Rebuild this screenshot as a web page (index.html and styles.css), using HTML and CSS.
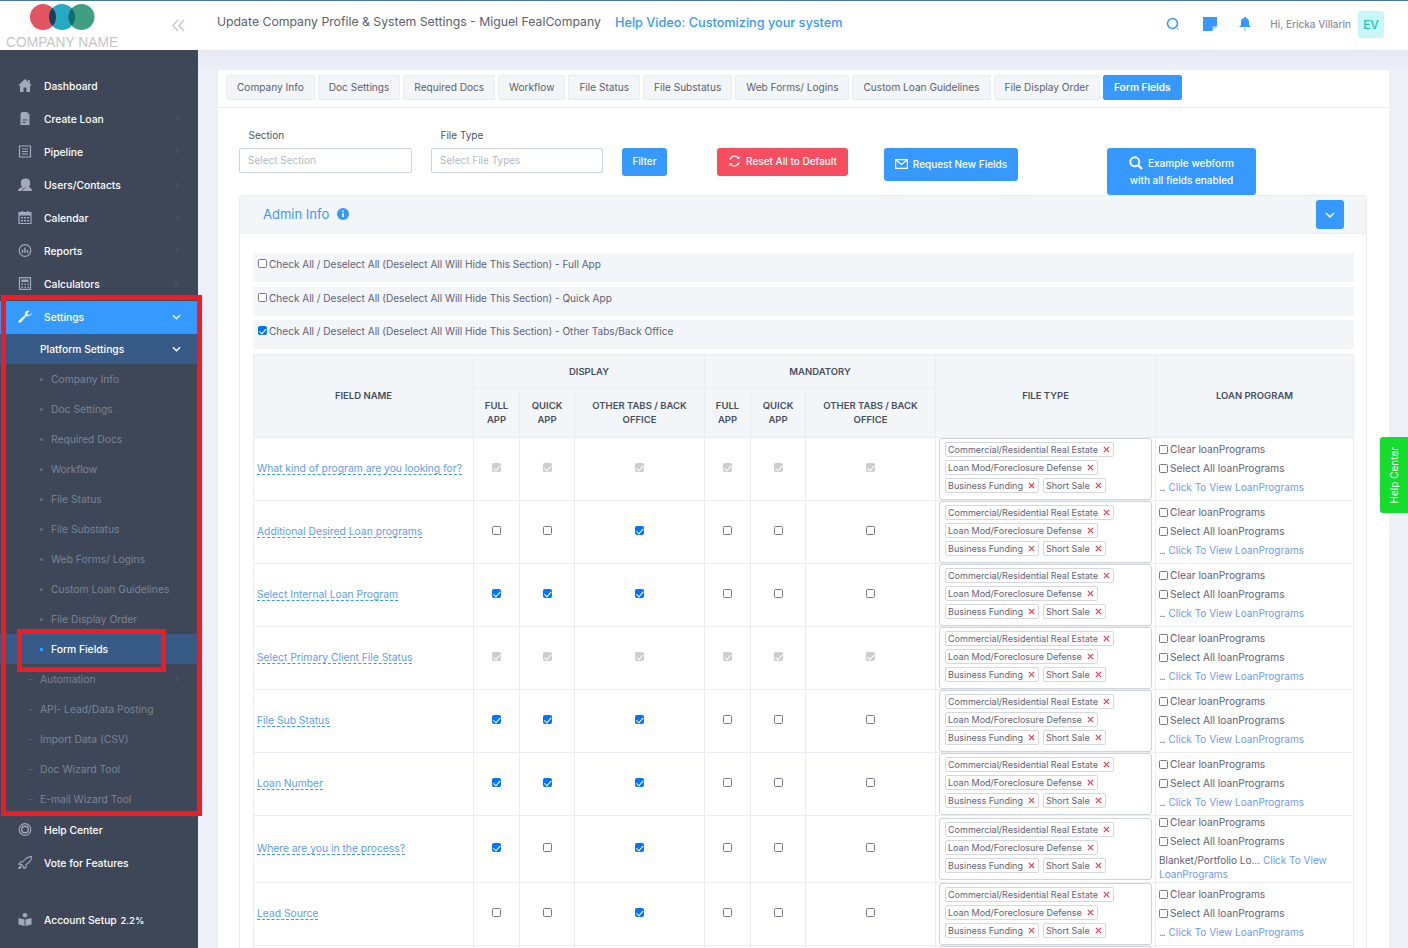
FILE: index.html
```html
<!DOCTYPE html>
<html lang="en">
<head>
<meta charset="utf-8">
<title>Form Fields</title>
<link rel="stylesheet" href="styles.css">
</head>
<body>
<svg class="defs" width="0" height="0" aria-hidden="true">
  <defs>
    <symbol id="i-x" viewBox="0 0 8 8"><path d="M1 1l6 6M7 1L1 7" fill="none" stroke="#f0374b" stroke-width="1.300"/></symbol>
    <symbol id="i-gt" viewBox="0 0 6 10"><path d="M1 1l4 4-4 4" fill="none" stroke="#566072" stroke-width="1"/></symbol>
    <symbol id="i-down" viewBox="0 0 10 6"><path d="M1 1l4 4 4-4" fill="none" stroke="#fff" stroke-width="1.400"/></symbol>
  </defs>
</svg>
<div class="app">
  <aside class="sidebar">
    <div class="brand">
      <svg class="logo" width="66" height="28" viewBox="0 0 66 28">
        <circle cx="13" cy="14" r="13" fill="#e2545f"/>
        <circle cx="51.500" cy="14" r="13" fill="#3f9f83"/>
        <circle cx="32" cy="14" r="13" fill="#27a9c1"/>
        <path d="M22.500 5.100a13 13 0 0 1 0 17.800 13 13 0 0 1 0-17.800z" fill="#1e3d58"/>
        <path d="M41.800 5.300a13 13 0 0 1 0 17.400 13 13 0 0 1 0-17.400z" fill="#0e6f6d"/>
      </svg>
      <div class="brand-name">COMPANY NAME</div>
    </div>
    <nav class="nav">
      <a class="nav-item"><svg class="nav-ico" viewBox="0 0 14 13"><path d="M7 0L0 6.500h2V13h3.600V8.500h2.800V13H12V6.500h2l-2.200-2.100V1h-1.700v1.800z" fill="#a3a9b8"/></svg><span>Dashboard</span></a>
      <a class="nav-item"><svg class="nav-ico" viewBox="0 0 14 13"><path d="M4 0h5l2.500 2.500V13H2.500V1.500zM4.500 7.500h5v1h-5zm0 2.500h3.200v1H4.500z" fill="#a3a9b8" fill-rule="evenodd"/></svg><span>Create Loan</span><svg class="nav-gt"><use href="#i-gt"/></svg></a>
      <a class="nav-item"><svg class="nav-ico" viewBox="0 0 14 13"><path d="M1.500 1h11v11h-11zM4 4h6M4 6.500h6M4 9h6" fill="none" stroke="#a3a9b8" stroke-width="1.200"/></svg><span>Pipeline</span><svg class="nav-gt"><use href="#i-gt"/></svg></a>
      <a class="nav-item"><svg class="nav-ico" viewBox="0 0 14 13"><path d="M0 13c0-2.500 2.500-3 4-4-.8-1.200-1.200-2.500-1.200-4.200C2.800 2 4.500.5 7.500.5s4.700 1.500 4.700 4.300c0 1.700-.4 3-1.200 4.200 1 .7 2.800 1.200 3 4z" fill="#a3a9b8"/><path d="M4.200 13c.2-2 1.800-3 3-3.700" fill="none" stroke="#3e4758" stroke-width=".8"/></svg><span>Users/Contacts</span><svg class="nav-gt"><use href="#i-gt"/></svg></a>
      <a class="nav-item"><svg class="nav-ico" viewBox="0 0 14 13"><path d="M1 1.500h12v11H1z" fill="none" stroke="#a3a9b8" stroke-width="1.200"/><path d="M1 1.500h12v3H1zM3.500 0H5v2.500H3.500zM9 0h1.500v2.500H9zM3 6h2v1.500H3zm3 0h2v1.500H6zm3 0h2v1.500H9zM3 9h2v1.500H3zm3 0h2v1.500H6zm3 0h2v1.500H9z" fill="#a3a9b8"/></svg><span>Calendar</span><svg class="nav-gt"><use href="#i-gt"/></svg></a>
      <a class="nav-item"><svg class="nav-ico" viewBox="0 0 14 13"><circle cx="7" cy="6.500" r="5.800" fill="none" stroke="#a3a9b8" stroke-width="1.200"/><path d="M4.500 5.500V9M7 3.500V9M9.500 6v3" stroke="#a3a9b8" stroke-width="1.400"/></svg><span>Reports</span><svg class="nav-gt"><use href="#i-gt"/></svg></a>
      <a class="nav-item"><svg class="nav-ico" viewBox="0 0 14 13"><path d="M1.500.6h11v11.800h-11z" fill="none" stroke="#a3a9b8" stroke-width="1.200"/><path d="M3.500 2.500h7V5h-7zM3.500 6.500H5V8H3.500zm3 0H8V8H6.500zm3 0H11V8H9.500zM3.500 9.500H5V11H3.500zm3 0H8V11H6.500zm3 0H11V11H9.500z" fill="#a3a9b8"/></svg><span>Calculators</span><svg class="nav-gt"><use href="#i-gt"/></svg></a>
      <a class="nav-item is-open"><svg class="nav-ico" viewBox="0 0 14 13"><path d="M13.800 2.800L11.500 5l-1.700-.4-.5-1.700L11.600.7C9.600 0 7.700 1 7.200 2.800c-.2.800-.1 1.400.1 1.900L1 10.300c-.7.800-.7 1.600-.2 2.100.6.600 1.400.5 2.100-.2l5.600-6.200c2.400.8 5.300-.7 5.300-3.200z" fill="#fff"/></svg><span>Settings</span><svg class="nav-down"><use href="#i-down"/></svg></a>
      <a class="sub-head"><span>Platform Settings</span><svg class="nav-down"><use href="#i-down"/></svg></a>
      <a class="sub-item"><i class="dot"></i>Company Info</a>
      <a class="sub-item"><i class="dot"></i>Doc Settings</a>
      <a class="sub-item"><i class="dot"></i>Required Docs</a>
      <a class="sub-item"><i class="dot"></i>Workflow</a>
      <a class="sub-item"><i class="dot"></i>File Status</a>
      <a class="sub-item"><i class="dot"></i>File Substatus</a>
      <a class="sub-item"><i class="dot"></i>Web Forms/ Logins</a>
      <a class="sub-item"><i class="dot"></i>Custom Loan Guidelines</a>
      <a class="sub-item"><i class="dot"></i>File Display Order</a>
      <a class="sub-item is-active"><i class="dot"></i>Form Fields</a>
      <a class="sub-top"><i class="dash"></i><span>Automation</span><svg class="nav-gt"><use href="#i-gt"/></svg></a>
      <a class="sub-top"><i class="dash"></i><span>API- Lead/Data Posting</span></a>
      <a class="sub-top"><i class="dash"></i><span>Import Data (CSV)</span></a>
      <a class="sub-top"><i class="dash"></i><span>Doc Wizard Tool</span></a>
      <a class="sub-top"><i class="dash"></i><span>E-mail Wizard Tool</span></a>
      <a class="nav-item"><svg class="nav-ico" viewBox="0 0 14 13"><circle cx="7" cy="6.500" r="5.800" fill="none" stroke="#a3a9b8" stroke-width="1.200"/><circle cx="7" cy="6.500" r="3.300" fill="none" stroke="#a3a9b8" stroke-width="1.400"/></svg><span>Help Center</span></a>
      <a class="nav-item"><svg class="nav-ico" viewBox="0 0 14 13"><path d="M13.500.5c-3.500.3-6.200 2-8.500 5l-2.500.5L.8 8.200l2.700.2 2.200 2.300.2 2 2.300-1.800-.2-2.500C11.500 6.700 13.500 3.500 13.500.5zM.8 12.600c.2-1.300.7-2.200 1.800-2.700l.9.900c-.4 1.100-1.300 1.600-2.700 1.800z" fill="none" stroke="#a3a9b8" stroke-width="1.100"/></svg><span>Vote for Features</span></a>
      <a class="nav-item nav-account"><svg class="nav-ico" viewBox="0 0 14 13"><circle cx="7" cy="2.300" r="2.300" fill="#a3a9b8"/><path d="M.5 5L6.500 6.500V13l-6-1.500zM13.500 5L7.500 6.500V13l6-1.500z" fill="#a3a9b8"/></svg><span>Account Setup <b class="pct">2.2%</b></span></a>
    </nav>
  </aside>

  <div class="main">
    <header class="topbar">
      <svg class="collapse" width="13" height="13" viewBox="0 0 13 13"><path d="M6 1L1 6.500 6 12M12 1L7 6.500l5 5.500" fill="none" stroke="#c3c8da" stroke-width="1.400"/></svg>
      <div class="page-title">Update Company Profile &amp; System Settings - Miguel FealCompany</div>
      <a class="help-video">Help Video: Customizing your system</a>
      <div class="top-tools">
        <svg class="tool" width="14" height="14" viewBox="0 0 14 14"><circle cx="6.500" cy="6.500" r="5" fill="none" stroke="#3699ff" stroke-width="1.600"/><path d="M10.500 10.500l2.500 2.500" stroke="#a8cdf5" stroke-width="1.300"/></svg>
        <svg class="tool tool-note" width="14" height="14" viewBox="0 0 14 14"><path d="M0 0h14v9l-5 5H0z" fill="#3699ff"/><path d="M9.500 13.500V9.500h4z" fill="#bcdcff"/></svg>
        <svg class="tool tool-bell" width="14" height="14" viewBox="0 0 14 14"><path d="M7 0c.7 0 1 .5 1 1 2 .5 3 2 3 4v3l2 2H1l2-2V5c0-2 1-3.500 3-4 0-.5.300-1 1-1z" fill="#3699ff"/><circle cx="7" cy="12.500" r="1.300" fill="#a8cdf5"/></svg>
        <span class="hi">Hi, Ericka Villarin</span>
        <span class="avatar">EV</span>
      </div>
    </header>

    <main class="content">
      <section class="card">
        <div class="tabs">
          <a class="tab">Company Info</a>
          <a class="tab">Doc Settings</a>
          <a class="tab">Required Docs</a>
          <a class="tab">Workflow</a>
          <a class="tab">File Status</a>
          <a class="tab">File Substatus</a>
          <a class="tab">Web Forms/ Logins</a>
          <a class="tab">Custom Loan Guidelines</a>
          <a class="tab">File Display Order</a>
          <a class="tab tab-active">Form Fields</a>
        </div>
        <div class="card-body">
          <div class="filters">
            <div class="field field-section">
              <label class="field-label">Section</label>
              <input class="field-input" placeholder="Select Section">
            </div>
            <div class="field field-type">
              <label class="field-label">File Type</label>
              <input class="field-input" placeholder="Select File Types">
            </div>
            <button class="btn btn-filter">Filter</button>
            <button class="btn btn-reset"><svg width="13" height="12" viewBox="0 0 13 12"><path d="M2 4.500A4.800 4.800 0 0 1 10.500 3M11 7.500A4.800 4.800 0 0 1 2.500 9" fill="none" stroke="#fff" stroke-width="1.200"/><path d="M11.500 1v3h-3zM1.500 11V8h3z" fill="#fff"/></svg>Reset All to Default</button>
            <button class="btn btn-request"><svg width="13" height="10" viewBox="0 0 13 10"><path d="M.6.6h11.800v8.800H.6zM1 1l5.500 4.500L12 1" fill="none" stroke="#fff" stroke-width="1.200"/></svg>Request New Fields</button>
            <button class="btn btn-example"><span class="btn-line"><svg width="14" height="14" viewBox="0 0 14 14"><circle cx="5.800" cy="5.800" r="4.500" fill="none" stroke="#fff" stroke-width="1.900"/><path d="M9 9l4 4" stroke="#fff" stroke-width="2.200"/></svg>Example webform</span><span class="btn-line">with all fields enabled</span></button>
          </div>

          <div class="panel">
            <div class="panel-head">
              <span class="panel-title">Admin Info</span>
              <svg class="info" width="12" height="12" viewBox="0 0 12 12"><circle cx="6" cy="6" r="6" fill="#3699ff"/><path d="M5.200 5h1.600v4H5.200zM5.200 2.500h1.600V4H5.200z" fill="#fff"/></svg>
              <button class="panel-toggle"><svg width="10" height="6"><use href="#i-down"/></svg></button>
            </div>
            <div class="panel-body">
              <div class="bar"><input type="checkbox" class="cb"><span>Check All / Deselect All (Deselect All Will Hide This Section) - Full App</span></div>
              <div class="bar bar-b"><input type="checkbox" class="cb"><span>Check All / Deselect All (Deselect All Will Hide This Section) - Quick App</span></div>
              <div class="bar"><input type="checkbox" class="cb" checked><span>Check All / Deselect All (Deselect All Will Hide This Section) - Other Tabs/Back Office</span></div>

              <table class="grid">
                <colgroup><col class="c-name"><col class="c-a"><col class="c-b"><col class="c-c"><col class="c-a"><col class="c-b"><col class="c-c"><col class="c-type"><col class="c-prog"></colgroup>
                <thead>
                  <tr class="h1"><th rowspan="2">FIELD NAME</th><th colspan="3">DISPLAY</th><th colspan="3">MANDATORY</th><th rowspan="2">FILE TYPE</th><th rowspan="2">LOAN PROGRAM</th></tr>
                  <tr class="h2"><th>FULL<br>APP</th><th>QUICK<br>APP</th><th>OTHER TABS / BACK<br>OFFICE</th><th>FULL<br>APP</th><th>QUICK<br>APP</th><th>OTHER TABS / BACK<br>OFFICE</th></tr>
                </thead>
                <tbody>
                  <tr>
                    <td class="name"><a>What kind of program are you looking for?</a></td>
                    <td><input type="checkbox" class="cb" checked disabled></td><td><input type="checkbox" class="cb" checked disabled></td><td><input type="checkbox" class="cb" checked disabled></td>
                    <td><input type="checkbox" class="cb" checked disabled></td><td><input type="checkbox" class="cb" checked disabled></td><td><input type="checkbox" class="cb" checked disabled></td>
                    <td class="type"><div class="tagbox"><span class="tag">Commercial/Residential Real Estate<svg><use href="#i-x"/></svg></span><span class="tag">Loan Mod/Foreclosure Defense<svg><use href="#i-x"/></svg></span><span class="tag">Business Funding<svg><use href="#i-x"/></svg></span><span class="tag">Short Sale<svg><use href="#i-x"/></svg></span></div></td>
                    <td class="prog"><label><input type="checkbox" class="cb">Clear loanPrograms</label><label><input type="checkbox" class="cb">Select All loanPrograms</label><p><i>...</i> <a>Click To View LoanPrograms</a></p></td>
                  </tr>
                  <tr>
                    <td class="name"><a>Additional Desired Loan programs</a></td>
                    <td><input type="checkbox" class="cb"></td><td><input type="checkbox" class="cb"></td><td><input type="checkbox" class="cb" checked></td>
                    <td><input type="checkbox" class="cb"></td><td><input type="checkbox" class="cb"></td><td><input type="checkbox" class="cb"></td>
                    <td class="type"><div class="tagbox"><span class="tag">Commercial/Residential Real Estate<svg><use href="#i-x"/></svg></span><span class="tag">Loan Mod/Foreclosure Defense<svg><use href="#i-x"/></svg></span><span class="tag">Business Funding<svg><use href="#i-x"/></svg></span><span class="tag">Short Sale<svg><use href="#i-x"/></svg></span></div></td>
                    <td class="prog"><label><input type="checkbox" class="cb">Clear loanPrograms</label><label><input type="checkbox" class="cb">Select All loanPrograms</label><p><i>...</i> <a>Click To View LoanPrograms</a></p></td>
                  </tr>
                  <tr>
                    <td class="name"><a>Select Internal Loan Program</a></td>
                    <td><input type="checkbox" class="cb" checked></td><td><input type="checkbox" class="cb" checked></td><td><input type="checkbox" class="cb" checked></td>
                    <td><input type="checkbox" class="cb"></td><td><input type="checkbox" class="cb"></td><td><input type="checkbox" class="cb"></td>
                    <td class="type"><div class="tagbox"><span class="tag">Commercial/Residential Real Estate<svg><use href="#i-x"/></svg></span><span class="tag">Loan Mod/Foreclosure Defense<svg><use href="#i-x"/></svg></span><span class="tag">Business Funding<svg><use href="#i-x"/></svg></span><span class="tag">Short Sale<svg><use href="#i-x"/></svg></span></div></td>
                    <td class="prog"><label><input type="checkbox" class="cb">Clear loanPrograms</label><label><input type="checkbox" class="cb">Select All loanPrograms</label><p><i>...</i> <a>Click To View LoanPrograms</a></p></td>
                  </tr>
                  <tr>
                    <td class="name"><a>Select Primary Client File Status</a></td>
                    <td><input type="checkbox" class="cb" checked disabled></td><td><input type="checkbox" class="cb" checked disabled></td><td><input type="checkbox" class="cb" checked disabled></td>
                    <td><input type="checkbox" class="cb" checked disabled></td><td><input type="checkbox" class="cb" checked disabled></td><td><input type="checkbox" class="cb" checked disabled></td>
                    <td class="type"><div class="tagbox"><span class="tag">Commercial/Residential Real Estate<svg><use href="#i-x"/></svg></span><span class="tag">Loan Mod/Foreclosure Defense<svg><use href="#i-x"/></svg></span><span class="tag">Business Funding<svg><use href="#i-x"/></svg></span><span class="tag">Short Sale<svg><use href="#i-x"/></svg></span></div></td>
                    <td class="prog"><label><input type="checkbox" class="cb">Clear loanPrograms</label><label><input type="checkbox" class="cb">Select All loanPrograms</label><p><i>...</i> <a>Click To View LoanPrograms</a></p></td>
                  </tr>
                  <tr>
                    <td class="name"><a>File Sub Status</a></td>
                    <td><input type="checkbox" class="cb" checked></td><td><input type="checkbox" class="cb" checked></td><td><input type="checkbox" class="cb" checked></td>
                    <td><input type="checkbox" class="cb"></td><td><input type="checkbox" class="cb"></td><td><input type="checkbox" class="cb"></td>
                    <td class="type"><div class="tagbox"><span class="tag">Commercial/Residential Real Estate<svg><use href="#i-x"/></svg></span><span class="tag">Loan Mod/Foreclosure Defense<svg><use href="#i-x"/></svg></span><span class="tag">Business Funding<svg><use href="#i-x"/></svg></span><span class="tag">Short Sale<svg><use href="#i-x"/></svg></span></div></td>
                    <td class="prog"><label><input type="checkbox" class="cb">Clear loanPrograms</label><label><input type="checkbox" class="cb">Select All loanPrograms</label><p><i>...</i> <a>Click To View LoanPrograms</a></p></td>
                  </tr>
                  <tr>
                    <td class="name"><a>Loan Number</a></td>
                    <td><input type="checkbox" class="cb" checked></td><td><input type="checkbox" class="cb" checked></td><td><input type="checkbox" class="cb" checked></td>
                    <td><input type="checkbox" class="cb"></td><td><input type="checkbox" class="cb"></td><td><input type="checkbox" class="cb"></td>
                    <td class="type"><div class="tagbox"><span class="tag">Commercial/Residential Real Estate<svg><use href="#i-x"/></svg></span><span class="tag">Loan Mod/Foreclosure Defense<svg><use href="#i-x"/></svg></span><span class="tag">Business Funding<svg><use href="#i-x"/></svg></span><span class="tag">Short Sale<svg><use href="#i-x"/></svg></span></div></td>
                    <td class="prog"><label><input type="checkbox" class="cb">Clear loanPrograms</label><label><input type="checkbox" class="cb">Select All loanPrograms</label><p><i>...</i> <a>Click To View LoanPrograms</a></p></td>
                  </tr>
                  <tr>
                    <td class="name"><a>Where are you in the process?</a></td>
                    <td><input type="checkbox" class="cb" checked></td><td><input type="checkbox" class="cb"></td><td><input type="checkbox" class="cb" checked></td>
                    <td><input type="checkbox" class="cb"></td><td><input type="checkbox" class="cb"></td><td><input type="checkbox" class="cb"></td>
                    <td class="type"><div class="tagbox"><span class="tag">Commercial/Residential Real Estate<svg><use href="#i-x"/></svg></span><span class="tag">Loan Mod/Foreclosure Defense<svg><use href="#i-x"/></svg></span><span class="tag">Business Funding<svg><use href="#i-x"/></svg></span><span class="tag">Short Sale<svg><use href="#i-x"/></svg></span></div></td>
                    <td class="prog"><label><input type="checkbox" class="cb">Clear loanPrograms</label><label><input type="checkbox" class="cb">Select All loanPrograms</label><p>Blanket/Portfolio Lo... <a>Click To View LoanPrograms</a></p></td>
                  </tr>
                  <tr>
                    <td class="name"><a>Lead Source</a></td>
                    <td><input type="checkbox" class="cb"></td><td><input type="checkbox" class="cb"></td><td><input type="checkbox" class="cb" checked></td>
                    <td><input type="checkbox" class="cb"></td><td><input type="checkbox" class="cb"></td><td><input type="checkbox" class="cb"></td>
                    <td class="type"><div class="tagbox"><span class="tag">Commercial/Residential Real Estate<svg><use href="#i-x"/></svg></span><span class="tag">Loan Mod/Foreclosure Defense<svg><use href="#i-x"/></svg></span><span class="tag">Business Funding<svg><use href="#i-x"/></svg></span><span class="tag">Short Sale<svg><use href="#i-x"/></svg></span></div></td>
                    <td class="prog"><label><input type="checkbox" class="cb">Clear loanPrograms</label><label><input type="checkbox" class="cb">Select All loanPrograms</label><p><i>...</i> <a>Click To View LoanPrograms</a></p></td>
                  </tr>
                  <tr>
                    <td class="name"></td>
                    <td></td><td></td><td></td><td></td><td></td><td></td>
                    <td class="type"><div class="tagbox"></div></td>
                    <td class="prog"></td>
                  </tr>
                </tbody>
              </table>
            </div>
          </div>
        </div>
      </section>
    </main>
  </div>
</div>

<a class="help-tab"><span>Help Center</span></a>
<div class="mark mark-outer"></div>
<div class="mark mark-inner"></div>
</body>
</html>
```

FILE: styles.css
```css
* { box-sizing: border-box; }
html, body { margin: 0; height: 948px; overflow: hidden; }
body { font-family: Inter, "Open Sans", "Liberation Sans", sans-serif; font-size: 10.3px; color: #5e6278; background: #eef0f8; }
.defs { position: absolute; }
a { text-decoration: none; }
.app { display: flex; height: 948px; }

/* Sidebar */
.sidebar { width: 198px; flex: none; background: #3e4758; display: flex; flex-direction: column; }
.brand { height: 50px; background: #fff; border-top: 1px solid #4a78ad; padding: 2px 0 0 30px; }
.logo { display: block; }
.brand-name { margin: 5px 0 0 -24px; font: 13.8px/14px "Liberation Sans", sans-serif; color: #c4c6c9; white-space: nowrap; }
.nav { padding-top: 20px; display: flex; flex-direction: column; }
.nav-item { height: 33px; display: flex; align-items: center; padding: 0 0 1.500px 18px; color: #fff; font-weight: 500; }
.nav-ico { width: 14px; height: 13px; margin-right: 12px; flex: none; }
.nav-gt { width: 5px; height: 9px; margin-left: auto; margin-right: 19px; }
.nav-down { width: 9px; height: 6px; margin-left: auto; margin-right: 17px; }
.is-open { background: #3699ff; }
.sub-head { height: 30px; background: #375b86; color: #fff; display: flex; align-items: center; padding-left: 40px; font-weight: 500; }
.sub-item { height: 30px; display: flex; align-items: center; padding-left: 40px; color: #7b8395; }
.dot { width: 3px; height: 3px; margin-right: 8px; background: #5c6577; flex: none; }
.is-active { background: #375b86; color: #fff; font-weight: 500; }
.is-active .dot { background: #3699ff; }
.sub-top { height: 30px; display: flex; align-items: center; padding-left: 29px; color: #7b8395; }
.dash { width: 4px; height: 1px; margin-right: 7px; background: #5c6577; flex: none; }
.nav-account { margin-top: 24px; }
.pct { font-weight: 500; font-size: 9.400px; margin-left: 1px; }

/* Top bar */
.main { flex: 1; min-width: 0; display: flex; flex-direction: column; }
.topbar { height: 50px; flex: none; background: #fff; border-top: 1px solid #4a78ad; display: flex; align-items: center; padding-bottom: 3px; }
.collapse { margin-left: -26px; margin-right: 32px; position: relative; top: 1px; }
.page-title { font-size: 12.25px; color: #5b6072; white-space: nowrap; width: 398px; margin-bottom: 6px; }
.help-video { font-size: 12.7px; font-weight: 500; color: #3699ff; white-space: nowrap; margin-bottom: 4px; }
.top-tools { margin-left: auto; display: flex; align-items: center; padding-right: 24px; }
.tool { display: block; }
.tool-note { margin-left: 23px; }
.tool-bell { margin-left: 21px; margin-right: 18px; }
.hi { font-size: 10px; font-weight: 500; color: #8b8f9f; }
.avatar { width: 26px; height: 27px; margin-left: 7px; background: #c9f7f5; color: #1bc5bd; border-radius: 3px; display: flex; align-items: center; justify-content: center; font-size: 12px; font-weight: 500; }

/* Card */
.content { flex: 1; min-height: 0; padding: 20px 19px 0 20px; background: linear-gradient(#e6e8f2, #eef0f8 22px); }
.card { background: #fff; }
.tabs { height: 38px; border-bottom: 1px solid #ebedf3; display: flex; gap: 3px; padding: 5px 0 0 8px; }
.tab { height: 25px; padding: 0 10px 1.500px; display: flex; align-items: center; background: #f3f6f9; border: 1px solid #e9ecf1; border-radius: 2px; color: #5a5f72; white-space: nowrap; font-size: 10.1px; }
.tab-active { background: #3699ff; border-color: #3699ff; color: #fff; font-weight: 600; }
.card-body { padding: 22px 21px 0 21px; }

/* Filters */
.filters { display: flex; height: 65px; align-items: flex-start; }
.field { display: flex; flex-direction: column; }
.field-section { width: 173px; margin-right: 19px; }
.field-type { width: 172px; margin-right: 19px; }
.field-label { height: 18px; line-height: 11px; padding-left: 9.500px; color: #4f5365; font-size: 10px; }
.field-input { height: 25px; border: 1px solid #cfd3dc; border-radius: 2px; padding: 0 8px 1.500px; font: inherit; font-size: 10px; color: #5e6278; outline: 0; width: 100%; }
.field-input::placeholder { color: #b5b9c6; }
.btn { margin-top: 18px; border: 0; border-radius: 3px; color: #fff; background: #3699ff; font: 500 10px Inter, sans-serif; display: flex; align-items: center; justify-content: center; padding: 0; white-space: nowrap; }
.btn svg { margin-right: 5px; flex: none; }
.btn-filter { width: 45px; height: 28px; margin-right: 50px; padding-bottom: 2px; }
.btn-reset { width: 131px; height: 28px; background: #f64e60; margin-right: 36px; padding-bottom: 2px; }
.btn-request { width: 134px; height: 33px; margin-right: 89px; padding-bottom: 1px; }
.btn-example { width: 149px; height: 47px; flex-direction: column; }
.btn-line { display: flex; align-items: center; height: 17px; }

/* Panel */
.panel { width: 1128px; border: 1px solid #ebedf3; border-radius: 3px; }
.panel-head { height: 38px; background: #f3f6f9; border-bottom: 1px solid #ebedf3; display: flex; align-items: center; padding: 0 22px 0 23px; }
.panel-title { font-size: 13px; color: #3699ff; margin-bottom: 2px; }
.info { margin-left: 8px; margin-bottom: 1px; }
.panel-toggle { margin-left: auto; width: 28px; height: 29px; background: #3699ff; border: 0; border-radius: 3px; display: flex; align-items: center; justify-content: center; padding: 0; }
.panel-body { padding: 19px 12px 0 13px; }
.bar { height: 29px; background: #f3f6f9; margin-bottom: 5px; padding: 4px 0 0 5px; display: flex; align-items: flex-start; line-height: 14px; color: #5e6278; font-size: 10.05px; }
.bar-b { margin-bottom: 4px; }
.bar .cb { margin: 1.500px 2px 0 0; }

/* Checkbox */
.cb { appearance: none; width: 9px; height: 9px; margin: 0; flex: none; display: block; border: 1px solid #77797e; border-radius: 1.500px; background: #fff; position: relative; }
.cb:checked { background: #0075ff; border-color: #0075ff; }
.cb:disabled { background: #cdcdcd; border-color: #cdcdcd; }
.cb:checked::after { content: ""; position: absolute; left: 2px; top: 0; width: 3px; height: 5.500px; border: solid #fff; border-width: 0 1.200px 1.200px 0; transform: rotate(42deg); }

/* Table */
.grid { border-collapse: collapse; table-layout: fixed; width: 1101px; }
.c-name { width: 220px; } .c-a { width: 46px; } .c-b { width: 55px; } .c-c { width: 130px; } .c-type { width: 220px; } .c-prog { width: 198px; }
.grid th, .grid td { border: 1px solid #ebedf3; padding: 0; }
.grid th { background: #f3f6f9; color: #464e5f; font-weight: 600; font-size: 9.500px; line-height: 14px; text-align: center; vertical-align: middle; }
.h1 th { height: 34px; }
.h2 th { height: 49px; }
.grid td { height: 63px; text-align: center; vertical-align: middle; background: #fff; padding-bottom: 4px; }
.grid td > .cb { margin: 0 auto; }
.grid .name { padding: 0 0 3px 3px; text-align: left; }
.name a { color: #5f9bfb; border-bottom: 1px dashed #3699ff; font-size: 10.3px; }
.grid .type { padding: 0 3px; }
.tagbox { height: 62px; border: 1px solid #cfd3dc; border-radius: 3px; padding: 3px 5px 0; display: flex; flex-wrap: wrap; align-content: flex-start; gap: 3.500px 4px; text-align: left; }
.tag { height: 14.500px; display: inline-flex; align-items: center; padding: 0 3px 0 2px; border: 1px solid #d5d8e0; border-radius: 2px; font-size: 9px; color: #5e6278; white-space: nowrap; background: #fff; }
.tag svg { width: 7px; height: 7px; margin-left: 5px; }
.grid .prog { padding: 0 3px 1px; text-align: left; line-height: 14px; color: #5e6278; font-size: 10.2px; }
.prog label { display: flex; align-items: center; height: 14px; margin-bottom: 5px; }
.prog label:first-child { margin-top: -1px; }
.prog label .cb { margin-right: 2px; }
.prog p { margin: 1px 0 0; font-size: 10px; }
.prog a { color: #6c99fb; }
.prog i { font-style: normal; letter-spacing: -1px; margin-right: 1px; }

/* Help tab */
.help-tab { position: fixed; left: 1380px; top: 437px; width: 28px; height: 76px; background: #16dc2e; border-radius: 3px 0 0 3px; display: flex; align-items: center; justify-content: center; }
.help-tab span { writing-mode: vertical-rl; transform: rotate(180deg); color: #fff; font-size: 10px; }

/* Red annotation */
.mark { position: fixed; border: 5px solid #ee1c25; pointer-events: none; }
.mark-outer { left: 1px; top: 295px; width: 201px; height: 521px; }
.mark-inner { left: 17px; top: 629px; width: 149px; height: 43px; }
```
